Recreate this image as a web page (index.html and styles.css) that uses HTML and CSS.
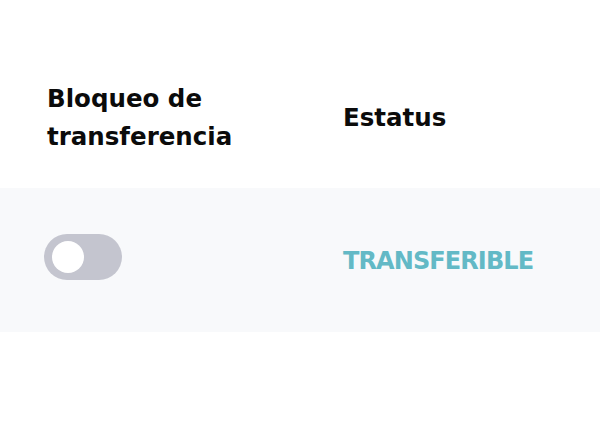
FILE: index.html
```html
<!DOCTYPE html>
<html lang="es">
<head>
<meta charset="utf-8">
<title>Bloqueo de transferencia</title>
<link rel="stylesheet" href="styles.css">
</head>
<body>
<div class="table">
  <div class="row head">
    <div class="cell first"><span class="title">Bloqueo de<br>transferencia</span></div>
    <div class="cell"><span class="title">Estatus</span></div>
  </div>
  <div class="row body">
    <div class="cell"><div class="switch" role="switch" aria-checked="false"><span class="knob"></span></div></div>
    <div class="cell"><span class="status">TRANSFERIBLE</span></div>
  </div>
</div>
</body>
</html>
```
FILE: styles.css
```css
html, body {
  margin: 0;
  padding: 0;
  background: #ffffff;
}
body {
  font-family: "DejaVu Sans", "Liberation Sans", sans-serif;
  width: 600px;
  height: 422px;
  overflow: hidden;
}
.row {
  display: grid;
  grid-template-columns: 299px 1fr;
  align-items: center;
  padding-left: 44px;
  box-sizing: border-box;
}
.head {
  height: 188px;
  padding-top: 80px;
  padding-bottom: 32px;
}
.first {
  padding-left: 3px;
}
.title {
  display: block;
  font-size: 24.5px;
  line-height: 38px;
  font-weight: 700;
  color: #0b0b0b;
}
.body {
  height: 144px;
  background: #f8f9fb;
}
.switch {
  width: 78px;
  height: 46px;
  border-radius: 23px;
  background: #c4c5cf;
  display: flex;
  align-items: center;
  padding: 0 8px;
  box-sizing: border-box;
  margin-top: -6px;
}
.knob {
  width: 32px;
  height: 32px;
  border-radius: 50%;
  background: #ffffff;
}
.status {
  display: block;
  font-size: 24px;
  font-weight: 700;
  letter-spacing: -0.9px;
  color: #63b9c6;
  margin-top: 2px;
}
```
